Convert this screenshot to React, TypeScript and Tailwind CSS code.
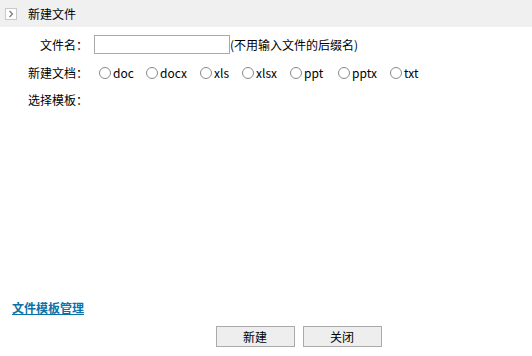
import React from "react";

const types: [string, string][] = [
  ["doc", "w-[47px]"],
  ["docx", "w-[54px]"],
  ["xls", "w-[42px]"],
  ["xlsx", "w-[48px]"],
  ["ppt", "w-[48px]"],
  ["pptx", "w-[52px]"],
  ["txt", "w-[40px]"],
];

export default function App() {
  return (
    <div
      className="w-[532px] h-[356px] bg-white text-[12px] text-black flex flex-col"
      style={{ fontFamily: '"Microsoft YaHei", "Noto Sans CJK SC", "Noto Sans", sans-serif' }}
    >
      <div className="h-[27px] bg-[#f0f0f0] flex items-center pl-[5px] shrink-0">
        <div className="w-[12px] h-[12px] border border-[#c8c8c8] bg-white flex items-center justify-center">
          <svg width="6" height="8" viewBox="0 0 6 8">
            <path d="M1.5 1 L4.5 4 L1.5 7" fill="none" stroke="#777" strokeWidth="1.2" />
          </svg>
        </div>
        <span className="ml-[11px] leading-none">新建文件</span>
      </div>

      <div className="flex flex-col pt-[8px]">
        <div className="flex items-center h-[19px]">
          <div className="w-[88px] text-right">文件名：</div>
          <input
            className="ml-[6px] w-[136px] h-[19px] border border-[#a9a9a9] bg-white outline-none px-1"
            type="text"
          />
          <span>(不用输入文件的后缀名)</span>
        </div>
        <div className="flex items-center h-[19px] mt-[9px]">
          <div className="w-[88px] text-right">新建文档：</div>
          <div className="flex items-center ml-[11px]">
            {types.map(([t, w]) => (
              <label key={t} className={"flex items-center " + w}>
                <span className="w-[12px] h-[12px] rounded-full border border-[#8a8a8a] bg-white inline-block shrink-0" />
                <span className="ml-[2px]">{t}</span>
              </label>
            ))}
          </div>
        </div>
        <div className="flex items-center h-[19px] mt-[8px]">
          <div className="w-[88px] text-right">选择模板：</div>
        </div>
      </div>

      <div className="flex-1" />

      <div className="pl-[12px] h-[20px] flex items-center">
        <a href="#" className="font-bold underline text-[#0b72a8] leading-none">
          文件模板管理
        </a>
      </div>
      <div className="flex justify-center gap-[8px] pl-[65px] mt-[8px] mb-[9px]">
        <button className="w-[79px] h-[21px] bg-[#eeeeee] border border-[#aaaaaa] text-[12px]">新建</button>
        <button className="w-[79px] h-[21px] bg-[#eeeeee] border border-[#aaaaaa] text-[12px]">关闭</button>
      </div>
    </div>
  );
}
